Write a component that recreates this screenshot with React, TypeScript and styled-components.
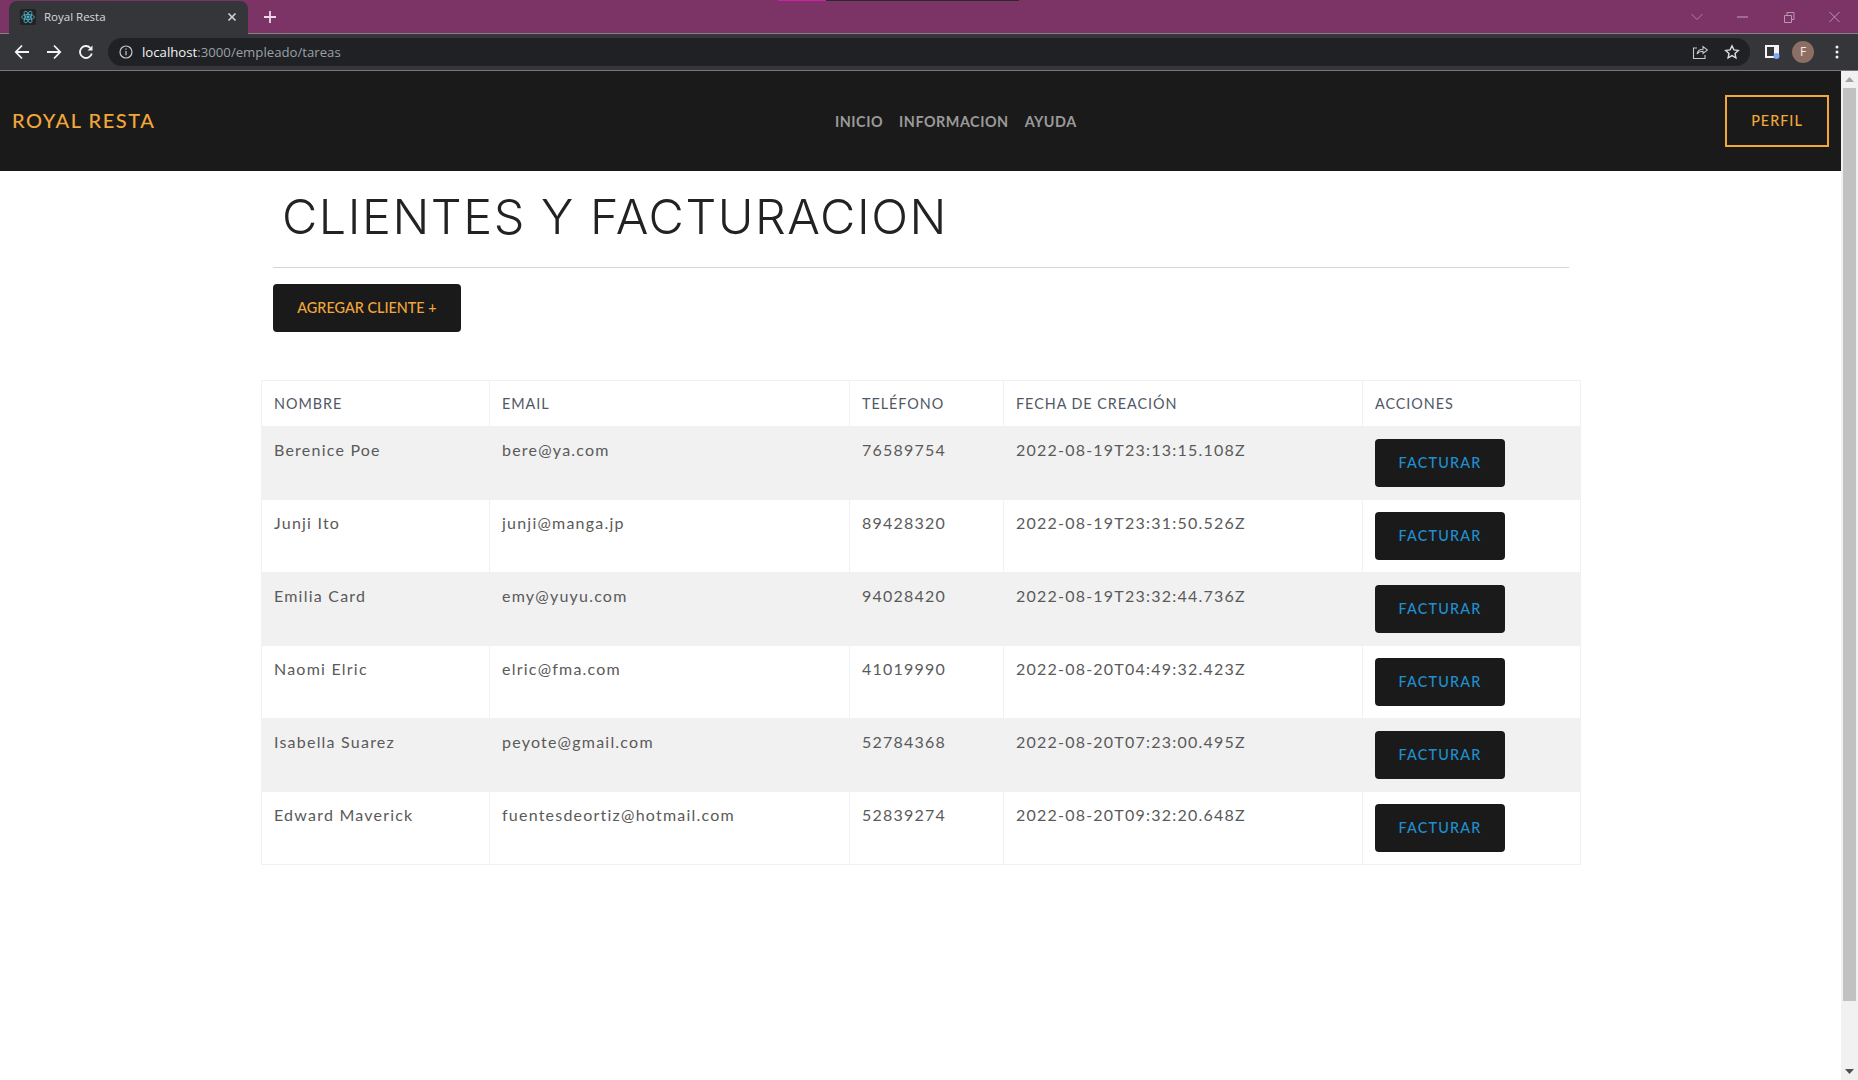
import React from "react";
import styled, { createGlobalStyle } from "styled-components";

const Global = createGlobalStyle`
  html, body { margin: 0; padding: 0; height: 100%; overflow: hidden; background: #fff; }
  #root { height: 100%; }
  * { box-sizing: border-box; }
`;

const Shell = styled.div`
  width: 1858px;
  height: 1080px;
  display: flex;
  flex-direction: column;
  font-family: Lato, sans-serif;
`;

const TabStrip = styled.div`
  height: 34px;
  background: #7c3366;
  border-bottom: 1px solid #8b7f8a;
  display: flex;
  align-items: flex-start;
  padding-left: 9px;
  position: relative;
`;

const Tab = styled.div`
  width: 239px;
  height: 34px;
  margin-top: 1px;
  background: #35363a;
  border-radius: 8px 8px 0 0;
  display: flex;
  align-items: center;
  padding: 0 11px 3px 11px;
  color: #d8d9db;
  font-family: "Open Sans", sans-serif;
  font-size: 11.5px;
  position: relative;
  z-index: 1;
`;

const Favicon = styled.span`
  width: 16px;
  height: 16px;
  background: #222;
  border-radius: 2px;
  display: flex;
  margin-right: 8px;
  align-items: center;
  justify-content: center;
`;

const TabTitle = styled.span`
  flex: 1;
`;

const NewTab = styled.span`
  margin: 11px 0 0 16px;
  display: flex;
`;

const ProgressMark = styled.div`
  position: absolute;
  top: 0;
  left: 778px;
  width: 241px;
  height: 1px;
  background: linear-gradient(to right, #d01fa5 0 48px, #2a2a2a 48px);
`;

const WindowControls = styled.div`
  margin-left: auto;
  display: flex;
  align-items: center;
  gap: 30px;
  padding: 6px 15px 0 0;
  height: 28px;
`;

const Toolbar = styled.div`
  height: 37px;
  background: #35363a;
  border-bottom: 1px solid #77777b;
  display: flex;
  align-items: center;
  padding: 0 0 1px 14px;
`;

const NavIcons = styled.div`
  display: flex;
  gap: 16px;
  margin-right: 14px;
`;

const Omnibox = styled.div`
  flex: 1;
  height: 28px;
  background: #202124;
  border-radius: 14px;
  display: flex;
  align-items: center;
  padding: 0 10px 0 11px;
  font-family: "Open Sans", sans-serif;
  font-size: 13.2px;
`;

const Host = styled.span`
  color: #f2f3f4;
  margin-left: 9px;
`;

const UrlRest = styled.span`
  color: #9aa0a6;
`;

const OmniEnd = styled.div`
  margin-left: auto;
  display: flex;
  align-items: center;
  gap: 16px;
`;

const ToolbarEnd = styled.div`
  display: flex;
  align-items: center;
  width: 108px;
  padding-left: 15px;
  flex: none;
`;

const Avatar = styled.span`
  width: 22px;
  height: 22px;
  border-radius: 50%;
  background: #8d6e63;
  color: #f3eeec;
  font-family: "Open Sans", sans-serif;
  font-size: 12px;
  display: flex;
  align-items: center;
  justify-content: center;
  margin: 0 21px 0 12px;
`;

const Viewport = styled.div`
  flex: 1;
  display: flex;
  min-height: 0;
`;

const Page = styled.div`
  flex: 1;
  min-width: 0;
  background: #fff;
`;

const Navbar = styled.nav`
  height: 100px;
  background: #1a1a1a;
  display: grid;
  grid-template-columns: 823px auto 1fr;
  align-items: center;
  padding: 0 12px;
`;

const Brand = styled.a`
  color: #f2a73b;
  font-size: 20px;
  font-weight: 500;
  letter-spacing: 1.55px;
  padding-bottom: 2px;
`;

const NavLinks = styled.div`
  display: flex;
  gap: 16px;
`;

const NavLink = styled.a`
  color: #9a9a9a;
  font-size: 14.4px;
  font-weight: 700;
  letter-spacing: 0.5px;
`;

const ProfileButton = styled.button`
  justify-self: end;
  width: 104px;
  height: 52px;
  padding: 0 0 2px;
  background: transparent;
  border: 2px solid #f2a73b;
  color: #f2a73b;
  font-family: Lato, sans-serif;
  font-size: 14.4px;
  font-weight: 500;
  letter-spacing: 1px;
`;

const Content = styled.main`
  width: 1320px;
  margin-left: 261px;
`;

const Heading = styled.h1`
  margin: 0 12px;
  padding: 0 9px 6px;
  height: 97px;
  display: flex;
  align-items: center;
  border-bottom: 1px solid #d5d5d5;
  font-family: Inter, sans-serif;
  font-weight: 300;
  font-size: 48.5px;
  color: #222;
  letter-spacing: 1.55px;
`;

const AddButton = styled.button`
  display: block;
  width: 188px;
  height: 48px;
  margin: 16px 0 48px 12px;
  padding: 0 0 2px;
  background: #1a1a1a;
  border: 0;
  border-radius: 4px;
  color: #f2a73b;
  font-family: Lato, sans-serif;
  font-size: 14.4px;
  font-weight: 500;
`;

const Table = styled.table`
  width: 1319px;
  table-layout: fixed;
  border-collapse: collapse;
  font-family: Lato, sans-serif;
  color: #5a5a5a;
`;

const HeadCell = styled.th`
  height: 46px;
  padding: 0 12px;
  border: 1px solid #f1f1f1;
  text-align: left;
  font-size: 14.4px;
  font-weight: 400;
  letter-spacing: 0.95px;
  color: #525866;
`;

const Row = styled.tr<{ $striped: boolean }>`
  background: ${(p) => (p.$striped ? "#f1f1f1" : "#fff")};
`;

const Cell = styled.td`
  height: 73px;
  padding: 11px 12px 0;
  vertical-align: top;
  border: 1px solid #f1f1f1;
  font-size: 16px;
  letter-spacing: 1.22px;
  line-height: 24px;
`;

const BillButton = styled.button`
  display: block;
  width: 130px;
  height: 48px;
  margin: 1px 0 0;
  padding: 0 0 2px;
  background: #1a1a1a;
  border: 0;
  border-radius: 4px;
  color: #1f8fd0;
  font-family: Lato, sans-serif;
  font-size: 14.4px;
  font-weight: 500;
  letter-spacing: 1.2px;
`;

const Scrollbar = styled.div`
  width: 17px;
  flex: none;
  background: #f1f1f1;
  display: flex;
  flex-direction: column;
  align-items: center;
`;

const ScrollArrow = styled.span`
  height: 17px;
  display: flex;
  align-items: center;
  justify-content: center;
`;

const ScrollThumb = styled.div`
  width: 13px;
  height: 913px;
  background: #c1c1c1;
`;

const ScrollSpacer = styled.div`
  flex: 1;
`;

const clients = [
  ["Berenice Poe", "bere@ya.com", "76589754", "2022-08-19T23:13:15.108Z"],
  ["Junji Ito", "junji@manga.jp", "89428320", "2022-08-19T23:31:50.526Z"],
  ["Emilia Card", "emy@yuyu.com", "94028420", "2022-08-19T23:32:44.736Z"],
  ["Naomi Elric", "elric@fma.com", "41019990", "2022-08-20T04:49:32.423Z"],
  ["Isabella Suarez", "peyote@gmail.com", "52784368", "2022-08-20T07:23:00.495Z"],
  ["Edward Maverick", "fuentesdeortiz@hotmail.com", "52839274", "2022-08-20T09:32:20.648Z"],
];

const columns: [string, number][] = [
  ["NOMBRE", 228],
  ["EMAIL", 360],
  ["TELÉFONO", 154],
  ["FECHA DE CREACIÓN", 359],
  ["ACCIONES", 218],
];

export default function App() {
  return (
    <Shell>
      <Global />
      <TabStrip>
        <ProgressMark />
        <Tab>
          <Favicon>
            <svg width="14" height="14" viewBox="0 0 24 24" fill="none" stroke="#4fb6d0" strokeWidth="1.4">
              <circle cx="12" cy="12" r="2" fill="#4fb6d0" />
              <ellipse cx="12" cy="12" rx="11" ry="4.4" />
              <ellipse cx="12" cy="12" rx="11" ry="4.4" transform="rotate(60 12 12)" />
              <ellipse cx="12" cy="12" rx="11" ry="4.4" transform="rotate(120 12 12)" />
            </svg>
          </Favicon>
          <TabTitle>Royal Resta</TabTitle>
          <svg width="10" height="10" viewBox="0 0 10 10" stroke="#d0d1d3" strokeWidth="1.7">
            <path d="M1.5 1.5l7 7M8.5 1.5l-7 7" />
          </svg>
        </Tab>
        <NewTab>
          <svg width="12" height="12" viewBox="0 0 12 12" stroke="#ecd9e6" strokeWidth="1.8">
            <path d="M6 0v12M0 6h12" />
          </svg>
        </NewTab>
        <WindowControls>
          <svg width="16" height="16" viewBox="0 0 16 16" fill="none" stroke="#a883a0" strokeWidth="1">
            <path d="M2.5 5l5.5 5.5L13.5 5" />
          </svg>
          <svg width="16" height="16" viewBox="0 0 16 16" fill="none" stroke="#c3a4ba" strokeWidth="1">
            <path d="M2 8h11" />
          </svg>
          <svg width="16" height="16" viewBox="0 0 16 16" fill="none" stroke="#b898ae" strokeWidth="1">
            <path d="M3.5 6.5h7v7h-7zM6 6.5V3.5h7v7h-3" />
          </svg>
          <svg width="16" height="16" viewBox="0 0 16 16" fill="none" stroke="#b898ae" strokeWidth="1">
            <path d="M2.5 3l10 10M12.5 3l-10 10" />
          </svg>
        </WindowControls>
      </TabStrip>
      <Toolbar>
        <NavIcons>
          <svg width="16" height="16" viewBox="0 0 16 16" fill="none" stroke="#f4f4f5" strokeWidth="1.8">
            <path d="M15 8H2M8 1.5L1.8 8 8 14.5" />
          </svg>
          <svg width="16" height="16" viewBox="0 0 16 16" fill="none" stroke="#f4f4f5" strokeWidth="1.8">
            <path d="M1 8h13M8 1.5L14.2 8 8 14.5" />
          </svg>
          <svg width="16" height="16" viewBox="0 0 16 16" fill="none" stroke="#f4f4f5" strokeWidth="1.8">
            <path d="M13.8 9.5A6 6 0 1 1 12.3 3.8" />
            <path d="M14.5 1.5v5h-5z" fill="#f4f4f5" stroke="none" />
          </svg>
        </NavIcons>
        <Omnibox>
          <svg width="14" height="14" viewBox="0 0 14 14" fill="none" stroke="#c8c9cb" strokeWidth="1.2">
            <circle cx="7" cy="7" r="6" />
            <path d="M7 6v4.2M7 3.5v1.3" />
          </svg>
          <Host>localhost</Host>
          <UrlRest>:3000/empleado/tareas</UrlRest>
          <OmniEnd>
            <svg width="16" height="16" viewBox="0 0 16 16" fill="none" stroke="#c8c9cb" strokeWidth="1.1">
              <path d="M5 4H1.5v10.5H13V11" />
              <path d="M5 10c.5-3 3-4.8 6-4.8V2.5L15.5 6 11 9.5V7.3C8.500 7.3 6.500 8 5 10z" />
            </svg>
            <svg width="16" height="16" viewBox="0 0 16 16" fill="none" stroke="#dcdddf" strokeWidth="1.4">
              <path d="M8 1.8l1.9 4.1 4.4.5-3.3 3 .9 4.4L8 11.6l-3.9 2.2.9-4.4-3.3-3 4.4-.5z" />
            </svg>
          </OmniEnd>
        </Omnibox>
        <ToolbarEnd>
          <svg width="15" height="15" viewBox="0 0 15 15">
            <path d="M0 1h14v13H0z" fill="#f4f4f5" />
            <path d="M2 3h7v9H2z" fill="#35363a" />
            <circle cx="11.5" cy="12" r="3" fill="#7baaf7" />
          </svg>
          <Avatar>F</Avatar>
          <svg width="4" height="14" viewBox="0 0 4 14" fill="#f1f1f2">
            <circle cx="2" cy="2" r="1.5" />
            <circle cx="2" cy="7" r="1.5" />
            <circle cx="2" cy="12" r="1.5" />
          </svg>
        </ToolbarEnd>
      </Toolbar>
      <Viewport>
        <Page>
          <Navbar>
            <Brand>ROYAL RESTA</Brand>
            <NavLinks>
              <NavLink>INICIO</NavLink>
              <NavLink>INFORMACION</NavLink>
              <NavLink>AYUDA</NavLink>
            </NavLinks>
            <ProfileButton>PERFIL</ProfileButton>
          </Navbar>
          <Content>
            <Heading>CLIENTES Y FACTURACION</Heading>
            <AddButton>AGREGAR CLIENTE +</AddButton>
            <Table>
              <colgroup>
                {columns.map(([name, width]) => (
                  <col key={name} width={width} />
                ))}
              </colgroup>
              <thead>
                <tr>
                  {columns.map(([name]) => (
                    <HeadCell key={name}>{name}</HeadCell>
                  ))}
                </tr>
              </thead>
              <tbody>
                {clients.map((row, i) => (
                  <Row key={row[1]} $striped={i % 2 === 0}>
                    {row.map((value) => (
                      <Cell key={value}>{value}</Cell>
                    ))}
                    <Cell>
                      <BillButton>FACTURAR</BillButton>
                    </Cell>
                  </Row>
                ))}
              </tbody>
            </Table>
          </Content>
        </Page>
        <Scrollbar>
          <ScrollArrow>
            <svg width="9" height="5" viewBox="0 0 9 5" fill="#a3a3a3">
              <path d="M4.5 0L9 5H0z" />
            </svg>
          </ScrollArrow>
          <ScrollThumb />
          <ScrollSpacer />
          <ScrollArrow>
            <svg width="9" height="5" viewBox="0 0 9 5" fill="#505050">
              <path d="M0 0h9L4.5 5z" />
            </svg>
          </ScrollArrow>
        </Scrollbar>
      </Viewport>
    </Shell>
  );
}
